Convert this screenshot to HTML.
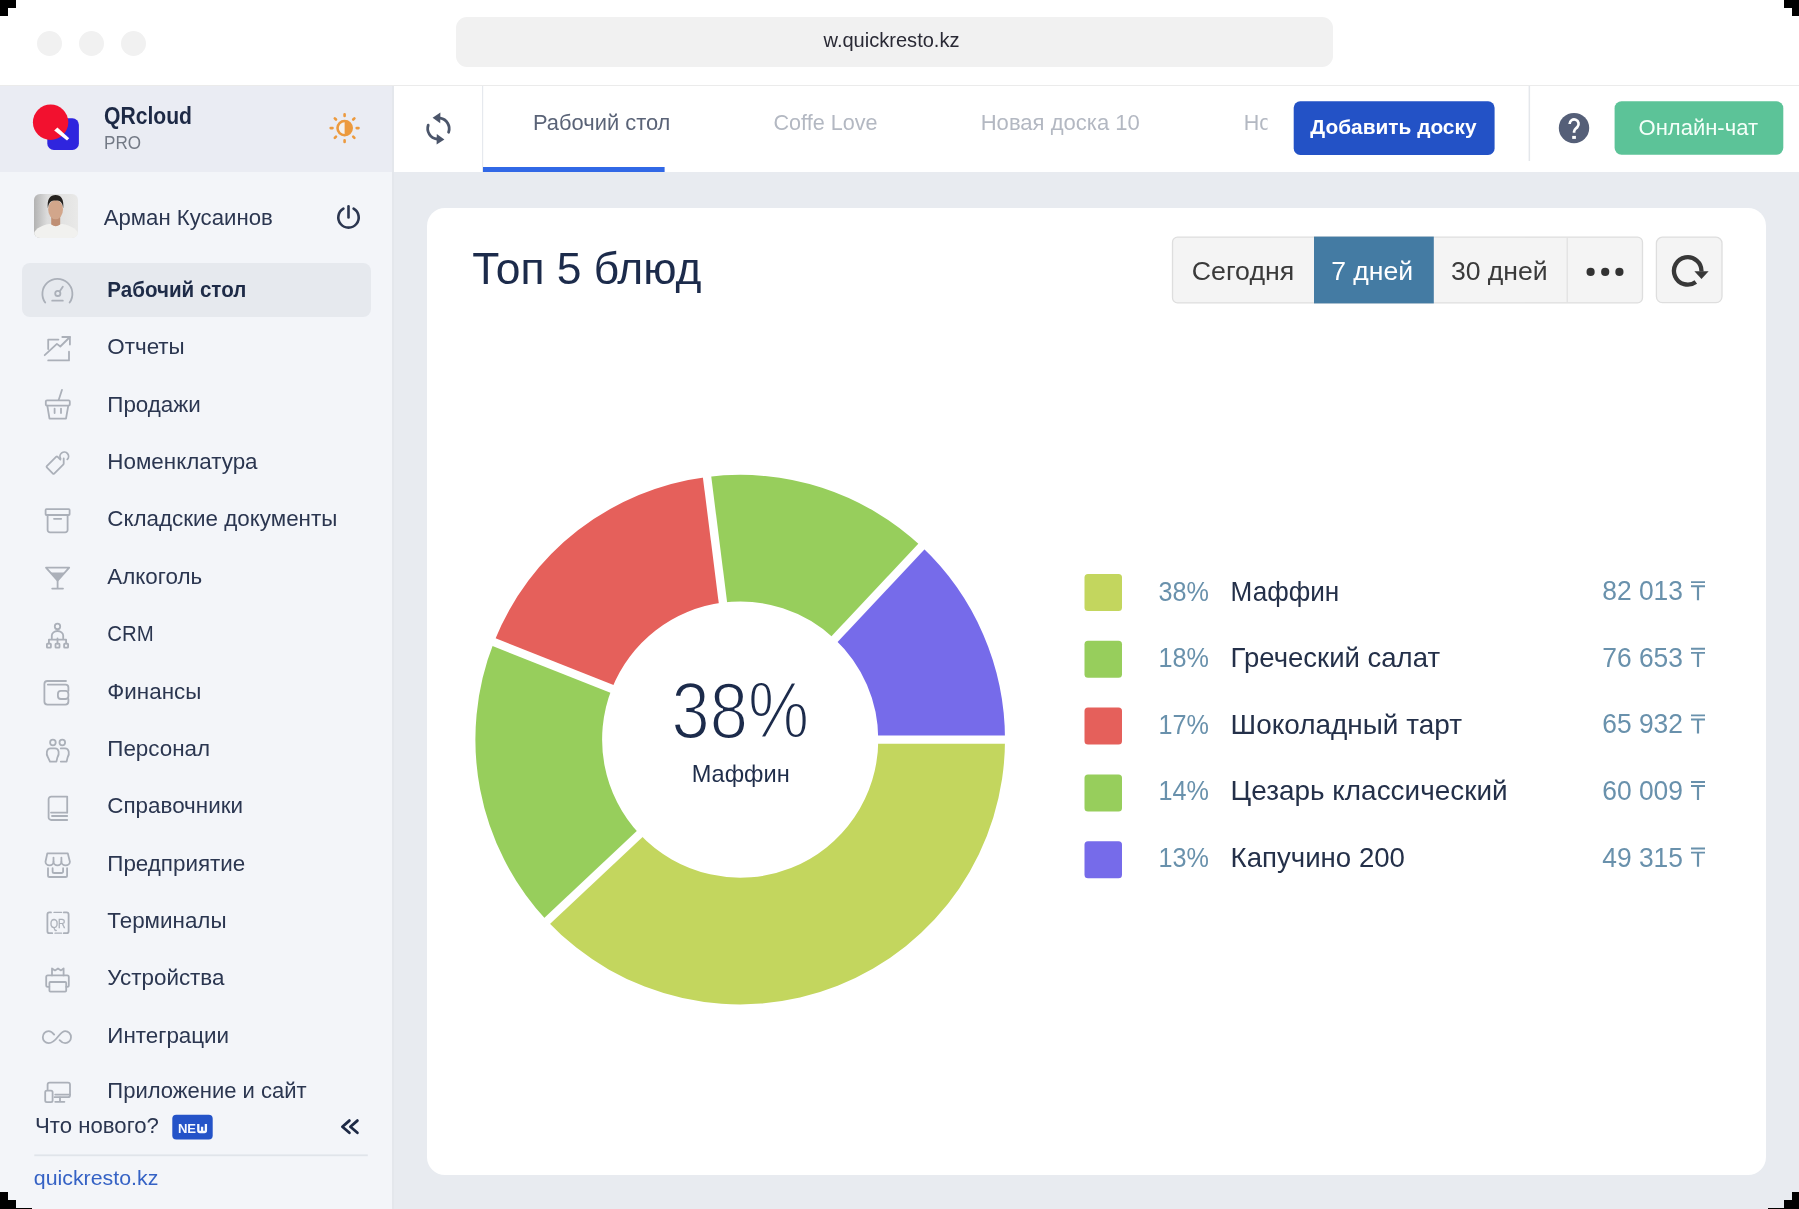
<!DOCTYPE html>
<html lang="ru">
<head>
<meta charset="utf-8">
<title>Quick Resto</title>
<style>
html,body{margin:0;padding:0;}
body{width:1799px;height:1209px;position:relative;overflow:hidden;background:#fff;font-family:"Liberation Sans",sans-serif;}
.abs{position:absolute;}
#chrome{left:0;top:0;width:1799px;height:85px;background:#fff;}
.dot{width:25px;height:25px;border-radius:50%;background:#f1f1f1;top:30.6px;}
#url{left:456px;top:16.6px;width:877px;height:50.9px;border-radius:11px;background:#f1f1f1;}
#sidebar{left:0;top:86px;width:392px;height:1123px;background:#f3f5f9;border-right:2px solid #e4e7ec;}
#sbhead{left:0;top:86px;width:392px;height:86px;background:#eaecf3;}
#active{left:22px;top:263px;width:349px;height:54px;border-radius:8px;background:#e6e9ee;}
#topbar{left:394px;top:86px;width:1405px;height:86px;background:#fff;}
#main{left:394px;top:172px;width:1405px;height:1037px;background:#e8ebf0;}
#card{left:427.4px;top:207.8px;width:1339px;height:967px;border-radius:18px;background:#fff;}
svg{position:absolute;left:0;top:0;will-change:transform;}
text{font-family:"Liberation Sans",sans-serif;}
.blk{background:#000;position:absolute;}
</style>
</head>
<body>
<div id="chrome" class="abs"></div>
<div class="abs dot" style="left:37px"></div>
<div class="abs dot" style="left:79px"></div>
<div class="abs dot" style="left:121px"></div>
<div id="url" class="abs"></div>
<div class="abs" style="left:0;top:85px;width:1799px;height:1px;background:#ebebeb"></div>
<div id="sidebar" class="abs"></div>
<div id="sbhead" class="abs"></div>
<div id="active" class="abs"></div>
<div id="topbar" class="abs"></div>
<div id="main" class="abs"></div>
<div id="card" class="abs"></div>

<svg width="1799" height="1209" viewBox="0 0 1799 1209">
<!-- URL -->
<text x="823.5" y="47.2" font-size="20" fill="#2a2a35" textLength="136" lengthAdjust="spacingAndGlyphs">w.quickresto.kz</text>

<!-- logo -->
<rect x="47.3" y="118.3" width="31.6" height="31.7" rx="6.5" fill="#2f25de"/>
<circle cx="50.6" cy="122.2" r="17.7" fill="#f2112f"/>
<path d="M54.2 130.6 L57.4 127.6 L69.2 138.2 L67.0 140.4 Z" fill="#fff"/>
<text x="104" y="124" font-size="23.5" font-weight="700" fill="#1d2945" textLength="88" lengthAdjust="spacingAndGlyphs">QRcloud</text>
<text x="104" y="149" font-size="18.6" fill="#737985" textLength="37" lengthAdjust="spacingAndGlyphs">PRO</text>
<!-- sun -->
<circle cx="344.6" cy="128.1" r="7.1" fill="#f4f1ee"/>
<path d="M344.6 121 A7.1 7.1 0 0 1 344.6 135.2 Z" fill="#ec9a3e"/>
<g stroke="#ec9a3e" stroke-width="2.6" stroke-linecap="round" fill="none">
<circle cx="344.6" cy="128.1" r="7.1"/>
<path d="M344.6 114.2v1.8M344.6 140.2v1.8M330.7 128.1h1.8M356.7 128.1h1.8M334.8 118.3l1.2 1.2M353.2 136.7l1.2 1.2M354.4 118.3l-1.2 1.2M336 136.7l-1.2 1.2"/>
</g>
<!-- avatar -->
<defs>
<clipPath id="av"><rect x="34" y="194" width="44" height="44" rx="6"/></clipPath>
<linearGradient id="avbg" x1="0" y1="0" x2="1" y2="0"><stop offset="0" stop-color="#b2b2b2"/><stop offset="0.3" stop-color="#dcdcdc"/><stop offset="1" stop-color="#e9e9e8"/></linearGradient>
</defs>
<g clip-path="url(#av)">
<rect x="34" y="194" width="44" height="44" fill="url(#avbg)"/>
<path d="M34 238 V233 C36 228 42 225.5 49 224 L62.5 224 C69.5 225.5 76 228 78 233 V238 Z" fill="#f1f1ef"/>
<path d="M51.2 215 H60.2 V224.6 Q55.7 228 51.2 224.6 Z" fill="#bf8f74"/>
<ellipse cx="55.6" cy="209.6" rx="7.4" ry="9.6" fill="#d2a68b"/>
<path d="M47.9 208.5 C46.8 199 50.2 195 55.6 195 C61 195 64.2 199 63.2 208.5 C62.6 202.2 60 200.6 55.6 200.6 C51.2 200.6 48.6 202.2 47.9 208.5 Z" fill="#26221f"/>
</g>
<text x="103.75" y="224.5" font-size="22" fill="#2b3650" textLength="169" lengthAdjust="spacingAndGlyphs">Арман Кусаинов</text>
<!-- power -->
<g stroke="#2b3650" stroke-width="2.6" stroke-linecap="round" fill="none">
<path d="M353.6 208.6 A10.2 10.2 0 1 1 343.4 208.6"/>
<path d="M348.5 206.4 V217.4"/>
</g>

<!-- nav texts -->
<text x="107.3" y="297.0" font-size="22.4" font-weight="700" fill="#1e2b47" textLength="139" lengthAdjust="spacingAndGlyphs">Рабочий стол</text>
<text x="107.3" y="354.4" font-size="22.4" fill="#2b3650">Отчеты</text>
<text x="107.3" y="411.7" font-size="22.4" fill="#2b3650">Продажи</text>
<text x="107.3" y="469.1" font-size="22.4" fill="#2b3650">Номенклатура</text>
<text x="107.3" y="526.4" font-size="22.4" fill="#2b3650">Складские документы</text>
<text x="107.3" y="583.8" font-size="22.4" fill="#2b3650">Алкоголь</text>
<text x="107.3" y="641.2" font-size="22.4" fill="#2b3650" textLength="46.4" lengthAdjust="spacingAndGlyphs">CRM</text>
<text x="107.3" y="698.5" font-size="22.4" fill="#2b3650">Финансы</text>
<text x="107.3" y="755.9" font-size="22.4" fill="#2b3650">Персонал</text>
<text x="107.3" y="813.2" font-size="22.4" fill="#2b3650">Справочники</text>
<text x="107.3" y="870.6" font-size="22.4" fill="#2b3650">Предприятие</text>
<text x="107.3" y="928.0" font-size="22.4" fill="#2b3650">Терминалы</text>
<text x="107.3" y="985.3" font-size="22.4" fill="#2b3650">Устройства</text>
<text x="107.3" y="1042.7" font-size="22.4" fill="#2b3650">Интеграции</text>
<text x="107.3" y="1098.3" font-size="22.4" fill="#2b3650" textLength="199.4" lengthAdjust="spacingAndGlyphs">Приложение и сайт</text>

<!-- nav icons -->
<g stroke="#abb0b9" stroke-width="1.8" fill="none" stroke-linecap="round" stroke-linejoin="round">
<!-- dashboard -->
<path d="M45.2 302.6 A15 15 0 1 1 69.6 302.6"/>
<circle cx="57.8" cy="293.4" r="2.6"/>
<path d="M59.6 291.4 L62.8 286.8"/>
<path d="M52.2 300.7 H62.8"/>
<!-- reports -->
<path d="M44.7 355.2 L56.9 343.9 L60.3 346.5 L69.9 337"/>
<path d="M62.3 337 H69.9 V344.6"/>
<path d="M48.2 349 V339.6 H58.4"/>
<path d="M69 351.7 V360.4 H48.2"/>
<!-- basket -->
<rect x="45.8" y="400.4" width="24" height="5.2" rx="1.2"/>
<path d="M58.6 400.2 L62 389.8"/>
<path d="M47.3 405.6 L49.5 418.6 H66 L68.3 405.6"/>
<path d="M54.6 408.6 V413 M61 408.6 V413"/>
<!-- tag -->
<path d="M60.4 459.6 L57.4 456.6 Q56.9 456.1 56.3 456.6 L46.8 466.1 Q46.2 466.8 46.8 467.4 L52.9 473.6 Q53.5 474.2 54.2 473.6 L63.2 464.6 Q63.7 464.1 63.7 463.4 V458.4"/>
<path d="M60.6 458.6 A4.3 4.3 0 1 1 67.3 459.4"/>
<!-- archive -->
<rect x="45.6" y="509.2" width="24" height="5.8" rx="0.8"/>
<path d="M47.6 515 V530 A2.4 2.4 0 0 0 50 532.4 H65.2 A2.4 2.4 0 0 0 67.6 530 V515"/>
<path d="M54 518.8 H61.2"/>
<!-- martini -->
<path d="M46 567.7 H69.2 L57.6 580.6 Z"/>
<path d="M50.4 572.6 H64.8 L57.6 580.6 Z" fill="#abb0b9" stroke="none"/>
<path d="M57.6 580.6 V588.6 M52.2 588.6 H63"/>
<!-- crm -->
<circle cx="57.5" cy="626.4" r="2.7"/>
<path d="M51.8 638.4 V635.6 A5.7 4.6 0 0 1 63.2 635.6 V638.4"/>
<path d="M48.9 643.6 V639.6 H66.1 V643.6 M57.5 638.4 V643.6"/>
<rect x="46.9" y="643.7" width="4" height="4" rx="0.6"/>
<rect x="55.5" y="643.7" width="4" height="4" rx="0.6"/>
<rect x="64.1" y="643.7" width="4" height="4" rx="0.6"/>
<!-- wallet -->
<path d="M66 681 H47.4 A3 3 0 0 0 44.4 684 V701.6 A3 3 0 0 0 47.4 704.6 H65.4 A3 3 0 0 0 68.4 701.6 V699"/>
<path d="M47.8 684.6 H65.6 A2.8 2.8 0 0 1 68.4 687.4 V690.9"/>
<rect x="57.9" y="690.9" width="10.5" height="8.1" rx="3"/>
<!-- personal -->
<circle cx="52.9" cy="742.5" r="2.8"/>
<circle cx="62.3" cy="742.5" r="2.8"/>
<path d="M50 761.6 H56.4 L57.4 757.4 Q59.2 754.6 58.6 751.6 Q58 748.4 55 748.4 H50.6 Q47.6 748.4 46.9 751.6 Q46.2 754.6 48 757.4 Z"/>
<path d="M60.8 748.4 H65 Q68 748.4 68.7 751.6 Q69.4 754.6 67.6 757.4 L66.6 761.6 H60.8"/>
<!-- book -->
<path d="M67.2 812.6 V796.6 H51.2 A2.6 2.6 0 0 0 48.6 799.2 V817.4 A2.6 2.6 0 0 0 51.2 820 H67.2"/>
<path d="M51 812.6 H67.2 M52 816 H67.2"/>
<!-- shop -->
<path d="M47.3 853.4 H67.8 L69.9 861.8 A4.25 3.6 0 0 1 61.4 861.8 A3.95 3.6 0 0 1 53.5 861.8 A4 3.6 0 0 1 45.5 861.8 Z"/>
<path d="M53.5 857.6 V861.8 M61.4 857.6 V861.8"/>
<path d="M48 868.2 V875.4 A1.6 1.6 0 0 0 49.6 877 H65.5 A1.6 1.6 0 0 0 67.1 875.4 V868.2"/>
<path d="M52.6 868.2 V871.4 A1.6 1.6 0 0 0 54.2 873 H61.5 A1.6 1.6 0 0 0 63.1 871.4 V868.2"/>
<!-- qr -->
<path d="M51 912.4 H49.4 A2 2 0 0 0 47.4 914.4 V931.2 A2 2 0 0 0 49.4 933.2 H52.2"/>
<path d="M63.8 912.4 H66.6 A2 2 0 0 1 68.6 914.4 V931.2 A2 2 0 0 1 66.6 933.2 H63.8"/>
<path d="M54 912.4 H61.6" stroke-width="1.3"/>
<path d="M55 933.2 H61.6" stroke-width="1.3"/>
<!-- printer -->
<path d="M52 975.4 V968.4 L55 970.4 L58 968.4 L61 970.4 L63.6 968.4 V975.4"/>
<path d="M49.3 986.8 H47.8 A1.6 1.6 0 0 1 46.2 985.2 V977 A1.6 1.6 0 0 1 47.8 975.4 H67.2 A1.6 1.6 0 0 1 68.8 977 V985.2 A1.6 1.6 0 0 1 67.2 986.8 H66.2"/>
<rect x="49.4" y="982" width="16.8" height="9.6" rx="1"/>
<!-- infinity -->
<path d="M54.2 1034.6 C52.5 1032.4 50.6 1031.1 48.6 1031.1 C45.3 1031.1 42.8 1033.9 42.8 1037.2 C42.8 1040.5 45.3 1043.2 48.6 1043.2 C53.5 1043.2 57 1038 59 1035.5 C61 1033 62.6 1031.1 65.2 1031.1 C68.4 1031.1 71 1033.9 71 1037.2 C71 1040.5 68.4 1043.2 65.2 1043.2 C63 1043.2 61.2 1042 59.6 1040.2"/>
<!-- app & site -->
<path d="M47.6 1089.6 V1084.6 A2 2 0 0 1 49.6 1082.6 H68 A2 2 0 0 1 70 1084.6 V1095.2 A2 2 0 0 1 68 1097.2 H54.6"/>
<rect x="45.2" y="1090.6" width="7.4" height="11.6" rx="1.6"/>
<path d="M60 1097.4 V1101.6 M55.2 1101.8 H64.4 M55.2 1094.6 H70"/>
</g>
<text x="49.9" y="927.8" font-size="12.6" fill="#abb0b9" stroke="#abb0b9" stroke-width="0.3" textLength="15.6" lengthAdjust="spacingAndGlyphs">QR</text>

<!-- bottom -->
<text x="35.1" y="1133.2" font-size="22" fill="#2b3650" textLength="123.8" lengthAdjust="spacingAndGlyphs">Что нового?</text>
<rect x="172.3" y="1114.7" width="40.4" height="24.9" rx="4" fill="#2453c8"/>
<text x="177.9" y="1133.1" font-size="13.6" font-weight="700" fill="#f4f8ff" textLength="18.2" lengthAdjust="spacingAndGlyphs">NE</text>
<path d="M198.3 1124 V1130.4 Q198.3 1132 199.9 1132 H204.3 Q205.9 1132 205.9 1130.4 V1124 M202.1 1126.8 V1132" fill="none" stroke="#f4f8ff" stroke-width="2.3"/>
<g stroke="#1d2945" stroke-width="2.8" fill="none" stroke-linecap="round" stroke-linejoin="round">
<path d="M349.4 1120.6 L342.4 1126.8 L349.4 1132.8"/>
<path d="M357.4 1120.6 L350.4 1126.8 L357.4 1132.8"/>
</g>
<rect x="34.3" y="1154.4" width="333.5" height="1.8" fill="#e0e4ea"/>
<text x="33.8" y="1185" font-size="21" fill="#3562c5" textLength="124.5" lengthAdjust="spacingAndGlyphs">quickresto.kz</text>

<!-- topbar -->
<rect x="482" y="86" width="1.2" height="86" fill="#e6e9ee"/>
<g fill="none" stroke="#4b556a" stroke-width="2.8" stroke-linecap="round">
<path d="M440.2 118.2 A10.6 10.6 0 0 1 448.6 132.2"/>
<path d="M428.2 125.2 A10.6 10.6 0 0 0 437 139"/>
</g>
<path d="M432.6 117.8 L440.4 112.6 L440.2 123.2 Z" fill="#4b556a"/>
<path d="M444.4 139.4 L436.6 144.4 L436.8 134 Z" fill="#4b556a"/>
<rect x="483" y="167" width="181.6" height="5" fill="#3168e6"/>
<text x="533" y="129.6" font-size="21.5" fill="#5a6377" textLength="137.4" lengthAdjust="spacingAndGlyphs">Рабочий стол</text>
<text x="773.5" y="129.8" font-size="21.5" fill="#b3b8c2" textLength="104" lengthAdjust="spacingAndGlyphs">Coffe Love</text>
<text x="980.7" y="129.9" font-size="21.5" fill="#b3b8c2" textLength="159.2" lengthAdjust="spacingAndGlyphs">Новая доска 10</text>
<defs><clipPath id="tabclip"><rect x="1200" y="90" width="67.5" height="60"/></clipPath></defs>
<text x="1243.8" y="129.9" font-size="21.5" fill="#b3b8c2" clip-path="url(#tabclip)">Новая доска</text>
<rect x="1293.7" y="101.3" width="200.9" height="53.7" rx="6.5" fill="#2352c6"/>
<text x="1310.3" y="134.1" font-size="21" font-weight="700" fill="#fff" textLength="166.2" lengthAdjust="spacingAndGlyphs">Добавить доску</text>
<rect x="1528.6" y="86" width="1.5" height="75" fill="#e4e7eb"/>
<circle cx="1574" cy="128.1" r="15.2" fill="#555f78"/>
<path d="M1569.6 124 A4.5 4.5 0 1 1 1577.4 127.0 C1576.0 128.6 1574.1 129.4 1574.1 131.4 V132.7" fill="none" stroke="#fff" stroke-width="2.7"/>
<rect x="1572.2" y="135.9" width="3.7" height="3" fill="#fff"/>
<rect x="1614.6" y="101.3" width="168.7" height="53.5" rx="7" fill="#5cc398"/>
<text x="1638.6" y="134.9" font-size="22" fill="#f4fff9" textLength="119.4" lengthAdjust="spacingAndGlyphs">Онлайн-чат</text>

<!-- card header -->
<text x="472.2" y="283.8" font-size="44" fill="#1c2b4b" textLength="229.2" lengthAdjust="spacingAndGlyphs">Топ 5 блюд</text>
<rect x="1172.5" y="237.2" width="470" height="65.6" rx="5" fill="#f4f4f4" stroke="#dedede" stroke-width="1.3"/>
<rect x="1314" y="236.6" width="119.8" height="66.8" fill="#447ba3"/>
<rect x="1566.6" y="237.8" width="1.2" height="64.4" fill="#e0e0e0"/>
<text x="1191.8" y="279.8" font-size="26.6" fill="#3a3a3a" textLength="102.4" lengthAdjust="spacingAndGlyphs">Сегодня</text>
<text x="1331.2" y="279.8" font-size="26.6" fill="#fff" textLength="82" lengthAdjust="spacingAndGlyphs">7 дней</text>
<text x="1450.9" y="279.8" font-size="26.6" fill="#3a3a3a" textLength="96.8" lengthAdjust="spacingAndGlyphs">30 дней</text>
<circle cx="1590.6" cy="271.9" r="4.1" fill="#333"/>
<circle cx="1605.2" cy="271.9" r="4.1" fill="#333"/>
<circle cx="1619.4" cy="271.9" r="4.1" fill="#333"/>
<rect x="1656.4" y="237.2" width="65.6" height="65.4" rx="6" fill="#f4f4f4" stroke="#dedede" stroke-width="1.3"/>
<path d="M1701.45 271.5 A13.75 13.75 0 1 0 1695.8 282.0" fill="none" stroke="#383838" stroke-width="4.3"/>
<path d="M1694.4 271.2 H1708.6 L1701.5 278.9 Z" fill="#383838"/>

<!-- donut -->
<path fill="#c3d65e" d="M1005.0 739.6A264.8 264.8 0 0 1 547.2 920.9L639.5 834.1A138.1 138.1 0 0 0 878.3 739.6Z"/>
<path fill="#97ce5c" d="M547.2 920.9A264.8 264.8 0 0 1 494.0 642.1L611.8 688.8A138.1 138.1 0 0 0 639.5 834.1Z"/>
<path fill="#e5605b" d="M494.0 642.1A264.8 264.8 0 0 1 707.0 476.9L722.9 602.6A138.1 138.1 0 0 0 611.8 688.8Z"/>
<path fill="#97ce5c" d="M707.0 476.9A264.8 264.8 0 0 1 921.5 546.6L834.7 638.9A138.1 138.1 0 0 0 722.9 602.6Z"/>
<path fill="#766bea" d="M921.5 546.6A264.8 264.8 0 0 1 1005.0 739.6L878.3 739.6A138.1 138.1 0 0 0 834.7 638.9Z"/>
<g stroke="#fff" stroke-width="8.4">
<line x1="740.2" y1="739.6" x2="1011.0" y2="739.6"/>
<line x1="740.2" y1="739.6" x2="542.8" y2="925.0"/>
<line x1="740.2" y1="739.6" x2="488.4" y2="639.9"/>
<line x1="740.2" y1="739.6" x2="706.3" y2="470.9"/>
<line x1="740.2" y1="739.6" x2="925.6" y2="542.2"/>
</g>
<text x="671.5" y="738.2" font-size="79" fill="#1c2b4b" stroke="#fff" stroke-width="2" textLength="137.5" lengthAdjust="spacingAndGlyphs">38%</text>
<text x="691.7" y="781.8" font-size="24" fill="#1f2d4a" textLength="98" lengthAdjust="spacingAndGlyphs">Маффин</text>

<!-- legend -->
<g>
<rect x="1084.5" y="574" width="37.5" height="37" rx="3.5" fill="#c3d65e"/>
<rect x="1084.5" y="640.8" width="37.5" height="37" rx="3.5" fill="#97ce5c"/>
<rect x="1084.5" y="707.6" width="37.5" height="37" rx="3.5" fill="#e5605b"/>
<rect x="1084.5" y="774.4" width="37.5" height="37" rx="3.5" fill="#97ce5c"/>
<rect x="1084.5" y="841.2" width="37.5" height="37" rx="3.5" fill="#766bea"/>
</g>
<g font-size="27.3" fill="#6991ac">
<text x="1158.6" y="600.5" textLength="50.4" lengthAdjust="spacingAndGlyphs">38%</text>
<text x="1158.6" y="667.1" textLength="50.4" lengthAdjust="spacingAndGlyphs">18%</text>
<text x="1158.6" y="733.7" textLength="50.4" lengthAdjust="spacingAndGlyphs">17%</text>
<text x="1158.6" y="800.3" textLength="50.4" lengthAdjust="spacingAndGlyphs">14%</text>
<text x="1158.6" y="866.9" textLength="50.4" lengthAdjust="spacingAndGlyphs">13%</text>
</g>
<g font-size="26.8" fill="#6991ac">
<text x="1683" y="600.2" text-anchor="end" textLength="80.8" lengthAdjust="spacingAndGlyphs">82 013</text>
<text x="1683" y="666.8" text-anchor="end" textLength="80.8" lengthAdjust="spacingAndGlyphs">76 653</text>
<text x="1683" y="733.4" text-anchor="end" textLength="80.8" lengthAdjust="spacingAndGlyphs">65 932</text>
<text x="1683" y="800.0" text-anchor="end" textLength="80.8" lengthAdjust="spacingAndGlyphs">60 009</text>
<text x="1683" y="866.6" text-anchor="end" textLength="80.8" lengthAdjust="spacingAndGlyphs">49 315</text>
</g>
<g fill="#6991ac">
<path d="M1691 581.2h14v1.9h-14zM1691 585.3h14v1.9h-14zM1696.9 587.2h2.2v13.1h-2.2z" transform="translate(0,0.0)"/>
<path d="M1691 581.2h14v1.9h-14zM1691 585.3h14v1.9h-14zM1696.9 587.2h2.2v13.1h-2.2z" transform="translate(0,66.6)"/>
<path d="M1691 581.2h14v1.9h-14zM1691 585.3h14v1.9h-14zM1696.9 587.2h2.2v13.1h-2.2z" transform="translate(0,133.2)"/>
<path d="M1691 581.2h14v1.9h-14zM1691 585.3h14v1.9h-14zM1696.9 587.2h2.2v13.1h-2.2z" transform="translate(0,199.8)"/>
<path d="M1691 581.2h14v1.9h-14zM1691 585.3h14v1.9h-14zM1696.9 587.2h2.2v13.1h-2.2z" transform="translate(0,266.4)"/>
</g>
<g font-size="27.3" fill="#243049">
<text x="1230.6" y="600.6" textLength="108.7" lengthAdjust="spacingAndGlyphs">Маффин</text>
<text x="1230.6" y="667.2" textLength="209.4" lengthAdjust="spacingAndGlyphs">Греческий салат</text>
<text x="1230.6" y="733.8" textLength="231.4" lengthAdjust="spacingAndGlyphs">Шоколадный тарт</text>
<text x="1230.6" y="800.4" textLength="277.0" lengthAdjust="spacingAndGlyphs">Цезарь классический</text>
<text x="1230.6" y="867.0" textLength="174.4" lengthAdjust="spacingAndGlyphs">Капучино 200</text>
</g>
</svg>

<!-- window corner masks -->
<div class="blk" style="left:0;top:0;width:16px;height:8px"></div>
<div class="blk" style="left:0;top:8px;width:8px;height:8px"></div>
<div class="blk" style="left:1784px;top:0;width:15px;height:8px"></div>
<div class="blk" style="left:1792px;top:8px;width:7px;height:8px"></div>
<div class="blk" style="left:0;top:1192px;width:8px;height:17px"></div>
<div class="blk" style="left:8px;top:1200px;width:8px;height:9px"></div>
<div class="blk" style="left:16px;top:1208px;width:16px;height:1px"></div>
<div class="blk" style="left:1792px;top:1192px;width:7px;height:17px"></div>
<div class="blk" style="left:1784px;top:1200px;width:8px;height:9px"></div>
<div class="blk" style="left:1768px;top:1208px;width:16px;height:1px"></div>
</body>
</html>
